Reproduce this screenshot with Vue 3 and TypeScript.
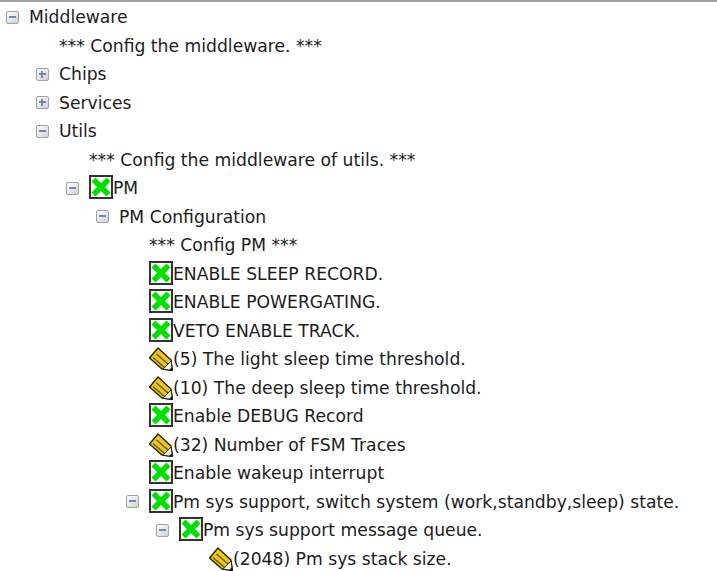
<template>
  <div class="tree">
    <div v-for="(row, i) in rows" :key="i" class="row" :style="{ paddingLeft: 6 + row.depth * 30 + 'px' }">
      <span class="toggle-slot">
        <span v-if="row.toggle" class="toggle">
          <i class="bar-h"></i>
          <i v-if="row.toggle === 'plus'" class="bar-v"></i>
        </span>
      </span>
      <span v-if="row.icon === 'check'" class="check">
        <svg width="20" height="20" viewBox="0 0 20 20">
          <path d="M0.500 4.500 L4.500 0.500 L10 6 L15.500 0.500 L19.500 4.500 L14 10 L19.500 15.500 L15.500 19.500 L10 14 L4.500 19.500 L0.500 15.500 L6 10 Z" fill="#00e000" />
        </svg>
      </span>
      <svg v-else-if="row.icon === 'pencil'" class="pencil" width="24" height="24" viewBox="0 0 24 24">
        <path d="M0.500 11 L9 1 L22 13 L23.500 23.500 L13 22 Z" fill="#ecc818" stroke="#1e1a00" stroke-width="1.300" stroke-linejoin="round" />
        <path d="M4 10.500 L15.500 20.500 M7.500 7 L19 17" stroke="#6a5600" stroke-width="1.500" fill="none" />
        <path d="M14 22.200 L22 14 L23.500 23.500 Z" fill="#faf6e0" stroke="#222" stroke-width="1" stroke-linejoin="round" />
        <path d="M20 23.300 L23.500 23.500 L23 20 Z" fill="#111" />
      </svg>
      <span class="label">{{ row.text }}</span>
    </div>
  </div>
</template>

<script setup lang="ts">
interface Row {
  depth: number
  text: string
  toggle?: 'plus' | 'minus'
  icon?: 'check' | 'pencil'
}

const rows: Row[] = [
  { depth: 0, text: 'Middleware', toggle: 'minus' },
  { depth: 1, text: '*** Config the middleware. ***' },
  { depth: 1, text: 'Chips', toggle: 'plus' },
  { depth: 1, text: 'Services', toggle: 'plus' },
  { depth: 1, text: 'Utils', toggle: 'minus' },
  { depth: 2, text: '*** Config the middleware of utils. ***' },
  { depth: 2, text: 'PM', toggle: 'minus', icon: 'check' },
  { depth: 3, text: 'PM Configuration', toggle: 'minus' },
  { depth: 4, text: '*** Config PM ***' },
  { depth: 4, text: 'ENABLE SLEEP RECORD.', icon: 'check' },
  { depth: 4, text: 'ENABLE POWERGATING.', icon: 'check' },
  { depth: 4, text: 'VETO ENABLE TRACK.', icon: 'check' },
  { depth: 4, text: '(5) The light sleep time threshold.', icon: 'pencil' },
  { depth: 4, text: '(10) The deep sleep time threshold.', icon: 'pencil' },
  { depth: 4, text: 'Enable DEBUG Record', icon: 'check' },
  { depth: 4, text: '(32) Number of FSM Traces', icon: 'pencil' },
  { depth: 4, text: 'Enable wakeup interrupt', icon: 'check' },
  { depth: 4, text: 'Pm sys support, switch system (work,standby,sleep) state.', toggle: 'minus', icon: 'check' },
  { depth: 5, text: 'Pm sys support message queue.', toggle: 'minus', icon: 'check' },
  { depth: 6, text: '(2048) Pm sys stack size.', icon: 'pencil' }
]
</script>

<style>
html,
body {
  background: #fff;
  overflow: hidden;
}
</style>

<style scoped>
.tree {
  width: 717px;
  height: 571px;
  box-sizing: border-box;
  border-top: 2px solid #a0a0a0;
  padding-top: 1px;
  font-family: "DejaVu Sans", sans-serif;
  font-size: 17.2px;
  color: #1c1c1c;
  overflow: hidden;
}

.row {
  display: flex;
  align-items: center;
  height: 28.5px;
  white-space: nowrap;
}

.toggle-slot {
  flex: none;
  width: 23px;
  display: flex;
}

.toggle {
  position: relative;
  width: 13px;
  height: 13px;
  box-sizing: border-box;
  border: 1px solid #a0a0a0;
  border-radius: 2px;
  background: linear-gradient(135deg, #ffffff, #d0d0d0);
}

.bar-h {
  position: absolute;
  left: 2px;
  top: 4px;
  width: 7px;
  height: 2px;
  background: #6a88b8;
}

.bar-v {
  position: absolute;
  left: 4px;
  top: 2px;
  width: 2px;
  height: 7px;
  background: #6a88b8;
}

.check {
  flex: none;
  width: 24px;
  height: 24px;
  margin-top: -2px;
  box-sizing: border-box;
  border: 2px solid #333;
  display: flex;
  background: #fff;
}

.pencil {
  flex: none;
}
</style>
